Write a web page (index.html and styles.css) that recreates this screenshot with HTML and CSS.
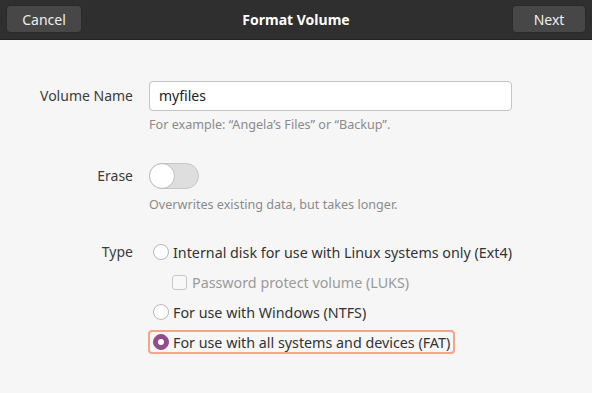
FILE: index.html
```html
<!DOCTYPE html>
<html>
<head>
<meta charset="utf-8">
<link rel="stylesheet" href="styles.css">
</head>
<body>
<header class="headerbar">
  <button class="hb-btn cancel">Cancel</button>
  <div class="title">Format Volume</div>
  <button class="hb-btn next">Next</button>
</header>
<main class="form">
  <div class="label row-name">Volume Name</div>
  <div class="entry">myfiles</div>
  <div></div>
  <div class="hint hint-name">For example: “Angela’s Files” or “Backup”.</div>

  <div class="label row-erase">Erase</div>
  <div class="switch-wrap row-erase"><div class="switch"><div class="knob"></div></div></div>
  <div></div>
  <div class="hint hint-erase">Overwrites existing data, but takes longer.</div>

  <div class="label row-type">Type</div>
  <div class="options">
    <div class="option"><span class="radio"></span><span>Internal disk for use with Linux systems only (Ext4)</span></div>
    <div class="option sub disabled"><span class="check"></span><span>Password protect volume (LUKS)</span></div>
    <div class="option"><span class="radio"></span><span>For use with Windows (NTFS)</span></div>
    <div class="option focused"><span class="radio checked"></span><span>For use with all systems and devices (FAT)</span></div>
  </div>
</main>
</body>
</html>
```
FILE: styles.css
```css
html, body {
  margin: 0;
  padding: 0;
  background: #f6f6f6;
  font-family: "Noto Sans", "Open Sans", sans-serif;
  font-size: 14px;
  color: #3c3c3c;
}
.headerbar {
  height: 40px;
  box-sizing: border-box;
  background: #2f2f2f;
  border-bottom: 1px solid #232323;
  display: flex;
  align-items: center;
  justify-content: space-between;
  padding: 0 6px 1px 6px;
  position: relative;
}
.hb-btn {
  height: 28px;
  box-sizing: border-box;
  background: #474747;
  border: 1px solid #2a2a2a;
  border-radius: 4px;
  color: #eeeeee;
  font-family: inherit;
  font-size: 14px;
  padding: 0;
}
.cancel { width: 76px; }
.next { width: 74px; }
.title {
  position: absolute;
  left: 0;
  right: 0;
  top: 0;
  height: 39px;
  line-height: 39px;
  text-align: center;
  color: #ffffff;
  font-weight: bold;
  pointer-events: none;
}
.form {
  display: grid;
  grid-template-columns: 133px 363px;
  column-gap: 16px;
  padding-top: 41px;
}
.label {
  text-align: right;
  color: #3c3c3c;
}
.row-name { line-height: 30px; }
.entry {
  height: 30px;
  box-sizing: border-box;
  background: #ffffff;
  border: 1px solid #c4c4c4;
  border-radius: 4px;
  padding-left: 9px;
  line-height: 28px;
  color: #222222;
}
.hint {
  color: #8b8b8b;
  font-size: 12.6px;
  line-height: 16px;
  white-space: nowrap;
}
.hint-name { margin-top: 6px; }
.label.row-erase { margin-top: 30px; line-height: 26px; }
.switch-wrap { margin-top: 30px; }
.switch {
  width: 50px;
  height: 26px;
  box-sizing: border-box;
  background: #dedede;
  border: 1px solid #c6c6c6;
  border-radius: 13px;
  position: relative;
}
.knob {
  position: absolute;
  left: -1px;
  top: -1px;
  width: 26px;
  height: 26px;
  box-sizing: border-box;
  border-radius: 50%;
  background: #ffffff;
  border: 1px solid #bdbdbd;
}
.hint-erase { margin-top: 8px; }
.label.row-type { margin-top: 27px; line-height: 24px; }
.options {
  margin-top: 27px;
  margin-left: -1px;
  display: flex;
  flex-direction: column;
  align-items: flex-start;
  gap: 6px;
  font-size: 14.3px;
}
.option {
  height: 24px;
  box-sizing: border-box;
  border: 1px solid transparent;
  border-radius: 4px;
  padding: 0 4px 0 4px;
  display: flex;
  align-items: center;
  gap: 4px;
  color: #333333;
  white-space: nowrap;
  flex: none;
}
.option.sub { padding-left: 23px; gap: 5px; }
.option.disabled { color: #9a9a9a; }
.option.focused { border: 2px solid #f2a68a; padding-left: 3px; padding-right: 3px; }
.radio {
  width: 16px;
  height: 16px;
  box-sizing: border-box;
  border-radius: 50%;
  background: #ffffff;
  border: 1px solid #b8b8b8;
  flex: none;
  position: relative;
}
.radio.checked {
  background: #924d8b;
  border-color: #924d8b;
}
.radio.checked::after {
  content: "";
  position: absolute;
  left: 4px;
  top: 4px;
  width: 6px;
  height: 6px;
  border-radius: 50%;
  background: #ffffff;
}
.check {
  width: 15px;
  height: 15px;
  box-sizing: border-box;
  border: 1px solid #c6c6c6;
  border-radius: 3px;
  background: #f8f8f8;
  flex: none;
}
```
